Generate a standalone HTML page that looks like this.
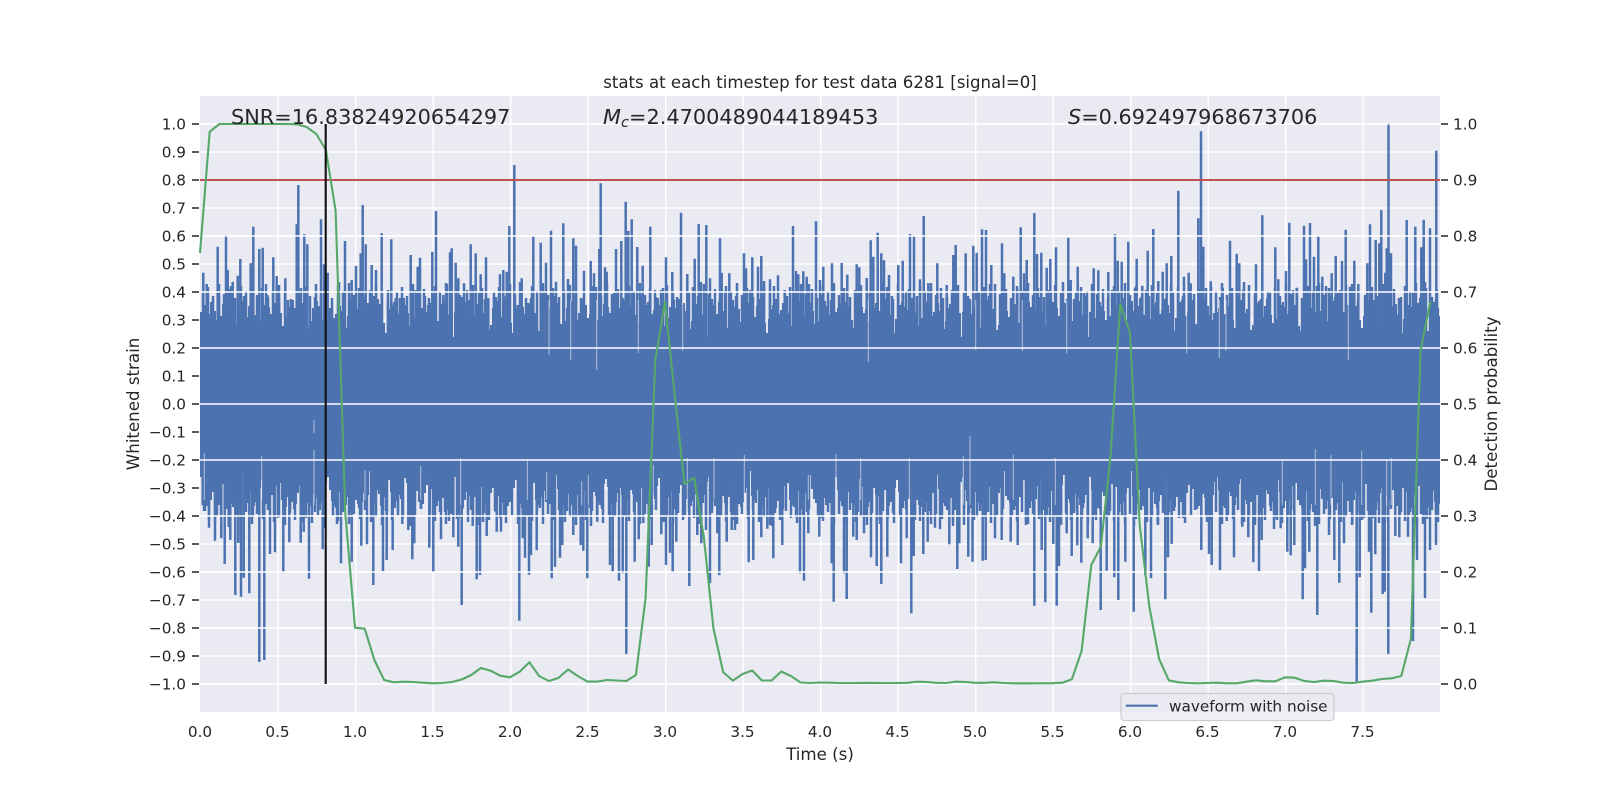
<!DOCTYPE html>
<html><head><meta charset="utf-8"><title>stats</title>
<style>html,body{margin:0;padding:0;background:#fff}svg{display:block}text{font-family:"DejaVu Sans",sans-serif;fill:#262626}</style></head>
<body>
<svg width="1600" height="800" viewBox="0 0 1600 800" xmlns="http://www.w3.org/2000/svg">
<defs>
<path id="ta" d="M1 34V60M3 30V60M5 27V60M7 40V60M9 36V60M11 24V60M13 28V60M15 33V60M17 42V60M19 50V60M21 38V60M23 26V60M25 22V60M27 29V60M29 35V60M31 31V60M33 44V60M35 52V60M37 47V60M39 30V60M41 25V60M43 23V60M45 33V60M47 39V60M49 28V60M51 21V60M53 26V60M55 37V60M57 45V60M59 55V60M61 41V60M63 31V60M65 27V60M67 24V60M69 29V60M71 36V60M73 32V60M75 25V60M77 20V60M79 27V60M81 35V60M83 48V60M85 53V60M87 40V60M89 29V60M91 24V60M93 22V60M95 30V60M97 38V60M99 34V60M101 27V60M103 25V60M105 33V60M107 46V60M109 51V60M111 43V60M113 30V60M115 26V60M117 23V60M119 28V60M121 37V60M123 42V60M125 35V60" stroke="#4C72B0" stroke-width="2.1" fill="none"/>
<path id="tb" d="M7 12V60M19 20V60M31 8V60M44 18V60M52 15V60M66 6V60M79 17V60M88 22V60M101 10V60M115 19V60M127 14V60M139 4V60M150 21V60M163 13V60M174 18V60" stroke="#4C72B0" stroke-width="2.5" fill="none"/>
<path id="tc" d="M3 14V60M8 9V60M13 18V60M19 6V60M24 16V60M30 11V60M35 20V60M41 8V60M46 13V60M52 5V60M57 17V60M62 10V60M68 19V60M73 12V60M79 7V60M85 15V60M91 21V60" stroke="#4C72B0" stroke-width="2.5" fill="none"/>
<pattern id="p1" width="127" height="60" patternUnits="userSpaceOnUse" patternTransform="translate(200,278)"><use href="#ta"/></pattern>
<pattern id="p2" width="181" height="60" patternUnits="userSpaceOnUse" patternTransform="translate(200,278)"><use href="#tb"/></pattern>
<pattern id="p5" width="97" height="60" patternUnits="userSpaceOnUse" patternTransform="translate(200,278)"><use href="#tc"/></pattern>
<pattern id="p3" width="127" height="60" patternUnits="userSpaceOnUse" patternTransform="translate(243,530) scale(1,-1)"><use href="#ta"/></pattern>
<pattern id="p4" width="181" height="60" patternUnits="userSpaceOnUse" patternTransform="translate(271,530) scale(1,-1)"><use href="#tb"/></pattern>
<pattern id="p6" width="97" height="60" patternUnits="userSpaceOnUse" patternTransform="translate(233,530) scale(1,-1)"><use href="#tc"/></pattern>
</defs>
<rect width="1600" height="800" fill="#fff"/>
<rect x="200" y="96" width="1240" height="616" fill="#EAEAF2"/>
<!-- left axes grid -->
<path d="M200 124H1440M200 152H1440M200 180H1440M200 208H1440M200 236H1440M200 264H1440M200 292H1440M200 320H1440M200 348H1440M200 376H1440M200 404H1440M200 432H1440M200 460H1440M200 488H1440M200 516H1440M200 544H1440M200 572H1440M200 600H1440M200 628H1440M200 656H1440M200 684H1440" stroke="#fff" stroke-width="1.4" fill="none"/>
<path d="M278.2 96V712M355.7 96V712M433.2 96V712M510.7 96V712M588.2 96V712M665.7 96V712M743.2 96V712M820.7 96V712M898.2 96V712M975.7 96V712M1053.2 96V712M1130.7 96V712M1208.2 96V712M1285.7 96V712M1363.2 96V712" stroke="#fff" stroke-width="1.4" fill="none"/>
<!-- waveform -->
<rect x="200" y="337" width="1240" height="134" fill="#4C72B0"/>
<rect x="200" y="278" width="1240" height="60" fill="url(#p1)"/>
<rect x="200" y="278" width="1240" height="60" fill="url(#p2)"/>
<rect x="200" y="278" width="1240" height="60" fill="url(#p5)"/>
<rect x="200" y="470" width="1240" height="60" fill="url(#p3)"/>
<rect x="200" y="470" width="1240" height="60" fill="url(#p4)"/>
<rect x="200" y="470" width="1240" height="60" fill="url(#p6)"/>
<path fill="none" stroke="#4C72B0" stroke-width="2.5" d="M203.3 272.7V345M206.7 284V345M217.7 246.7V345M226 235V345M227.7 270V345M232.7 281.7V345M237.7 275.7V345M240.3 259V345M250.7 263.3V345M253.3 226.7V345M259.3 249V345M262.7 247.7V345M267.3 295V345M273.3 257.3V345M276.7 276V345M285.3 278.3V345M296.7 224.3V345M298.3 185V345M304.3 234.3V345M307.3 244.3V345M321 219.3V345M324 264.3V345M327.7 272.7V345M345 241V345M351.7 280V345M356 266V345M360.7 253.3V345M362.7 205V345M365.7 244.3V345M371.7 265V345M376 270V345M381.7 233.3V345M391.3 239.3V345M395.7 298V345M410.7 255V345M415.7 290V345M417.7 266.7V345M420 257.7V345M432.3 251.7V345M436 211V345M443.3 295V345M450 252.3V345M451.7 248.3V345M455.7 262.7V345M458.3 278.3V345M464 283.3V345M470.7 244.3V345M475.7 253.3V345M480.7 274.3V345M486 257.3V345M488.3 298V345M494 296.7V345M500 274.3V345M503.3 270V345M506.7 271.7V345M509.3 226V345M514.3 165V345M517.7 305V345M521.7 278.3V345M528 303V345M533.3 236.7V345M540.7 242.7V345M546 262.7V345M551 230.7V345M556 281.7V345M563.3 223.3V345M568 279V345M573.3 238.3V345M576 245.7V345M584 270.7V345M590.7 261V345M594 273.3V345M600.7 183.3V345M599.3 249V345M605 267.3V345M606.7 271.7V345M616 249V345M621.3 241V345M625.7 201.7V345M628.3 231V345M631.7 219.3V345M637.3 247V345M642.7 265.7V345M650.3 226.7V345M655 290V345M666 257.3V345M672.3 272V345M681 212.7V345M687.3 274V345M694.7 258.7V345M698.7 224V345M706.3 225V345M710 278.3V345M720 238.3V345M721.7 272.7V345M729.3 273.3V345M736.7 297.7V345M744 253.3V345M746 268.3V345M752.3 257.3V345M758 266.7V345M761.3 256V345M764 281V345M770 279.3V345M778 275.3V345M784.7 290V345M793 226V345M796 271V345M798.3 274.3V345M803.3 271.3V345M806.7 276.7V345M816 221.3V345M820 280V345M823.3 266.7V345M832 263.3V345M841.7 263V345M847.3 274.7V345M856.7 264.3V345M859.3 267.3V345M866.7 278V345M870.7 240.3V345M873.3 256.7V345M877.7 232.7V345M881.3 253.3V345M884 260.3V345M889 275V345M898.3 265V345M902.7 260.7V345M910 234V345M914 235.7V345M920 279.3V345M923.7 216V345M928.3 283.3V345M937.3 263.3V345M946.7 285V345M953.3 255V345M955.7 245V345M965.7 253.3V345M973.3 245.7V345M976.7 252.7V345M982 229.3V345M986 230V345M991.3 265V345M1002 243.3V345M1004.3 273.3V345M1013.3 276.7V345M1017.3 289V345M1020.7 227.3V345M1024 273.3V345M1026.7 260V345M1034.3 213V345M1037 254V345M1041.3 252.7V345M1046.7 267.7V345M1050.3 259V345M1056 247.3V345M1068.3 237.7V345M1070.7 280V345M1077.7 266.7V345M1084 293V345M1093.7 268.3V345M1098.3 270.3V345M1108.3 272V345M1115 234.3V345M1117.7 260.7V345M1121.7 261.7V345M1128.3 241.7V345M1136.7 258.7V345M1142.3 285.7V345M1147.7 250.7V345M1153.3 229V345M1158.3 281V345M1162.7 271.7V345M1166.7 263.3V345M1171.3 256V345M1178.3 190.7V345M1184 276.7V345M1188.7 272.7V345M1190.7 283.3V345M1198.3 218.3V345M1201 131.3V345M1203.3 246.7V345M1210.7 281.3V345M1222.7 287.7V345M1230 240.7V345M1236.7 253.7V345M1239.3 263.3V345M1256 264.3V345M1262.3 215.3V345M1267.7 296.7V345M1275.3 247.3V345M1278.3 279.3V345M1286 271V345M1289.3 222.7V345M1296.7 287.7V345M1304 225.7V345M1306 259.3V345M1310 223V345M1314 256.7V345M1318.3 236V345M1322.3 276.7V345M1326 286V345M1331.7 273.3V345M1335.7 256V345M1342 261V345M1345.7 229.7V345M1350 286.7V345M1354.3 260.7V345M1358.3 284V345M1367.3 263.3V345M1370 224.3V345M1375.7 240V345M1379.3 243.3V345M1381.3 210V345M1385.3 272.7V345M1386.7 248.3V345M1388.5 123V345M1391 253.3V345M1406.7 220V345M1415.3 226.7V345M1421.3 247.3V345M1423.7 219.7V345M1430 228.3V345M1436.3 150.7V345"/>
<path fill="none" stroke="#4C72B0" stroke-width="2.5" d="M202.7 505V463M209 527.7V463M215 540.7V463M221.3 538.3V463M224.7 564V463M228.7 527V463M230.3 540V463M235.3 595V463M238.3 543V463M241 596.7V463M243.7 577.7V463M249.3 593.3V463M259.3 662V463M264.3 660V463M270 554V463M275 552.3V463M283.3 572.7V463M289.3 542.3V463M300.7 542.7V463M303.7 531.7V463M309 578.7V463M322.7 549.3V463M324.3 528V463M341 563.3V463M351.7 561.7V463M361.3 545.7V463M367 544.3V463M373.3 585V463M383 571V463M386.7 560V463M392.7 550V463M402.3 524V463M408.3 530V463M412.3 559.3V463M414.3 543.3V463M429.3 547.7V463M433.3 571.7V463M441 539.3V463M449 521V463M453.3 537.3V463M458.3 546.7V463M461.7 605V463M472.7 526V463M476.7 579.3V463M480 575V463M486.7 536V463M496.7 531.7V463M501 531.7V463M519.3 620.7V463M522.7 538.3V463M525 557.7V463M529 574.7V463M531 555V463M536.7 550.3V463M551.7 578.3V463M555 566.7V463M560 557.7V463M562.3 545V463M573.3 535V463M580.7 545V463M583.3 550.7V463M587.3 578.3V463M597.3 521.7V463M610 565V463M612.7 571.7V463M619 580.7V463M622.7 573.3V463M626.3 654V463M634.7 561.7V463M638.7 539.3V463M643.3 523V463M648.7 566.7V463M651.7 545V463M661.3 534.3V463M666 565V463M670 552.7V463M672.7 571.7V463M676.3 541.7V463M689.3 586V463M697.3 535V463M701.3 543.3V463M706 530V463M710 583.3V463M717.3 533.3V463M719.3 575.3V463M726.7 541.7V463M731.7 530V463M735 530V463M748.7 562.3V463M753.3 560V463M761.3 537.3V463M767.3 528.7V463M773.3 558.3V463M782.3 545V463M800 573.3V463M804 580.7V463M808.3 533.3V463M819.3 536.7V463M831.7 563.3V463M833.7 601.7V463M844 573.3V463M846.7 599V463M853.3 536.7V463M856.7 540V463M864 533.3V463M871 557.3V463M876.7 566V463M881.3 584V463M887.3 556.7V463M901 563.3V463M906.7 538.3V463M911.3 613.3V463M913.7 556V463M923.3 554V463M927.7 541.7V463M935 527.7V463M940 529.3V463M949.3 544.3V463M957.3 569V463M959.3 543.3V463M968.3 556.7V463M972.5 561.7V463M982.7 560.7V463M985.7 560V463M995 538.3V463M1001.7 540V463M1010.7 541.7V463M1017.7 545V463M1026 525V463M1034.3 605.7V463M1041.7 550V463M1045.3 602.3V463M1053.3 544V463M1056.7 605.7V463M1059 566V463M1066.7 533.3V463M1071.7 556V463M1077.3 545.3V463M1081.3 562.7V463M1087.7 538.3V463M1092.7 543.3V463M1100.7 610V463M1106.7 570.7V463M1114.3 577.3V463M1118.3 600V463M1125.3 561.7V463M1133.7 611.7V463M1145.3 575V463M1151 578.3V463M1157.7 523.3V463M1165.3 599.3V463M1168 557.3V463M1171.7 544V463M1201.3 550V463M1209 554V463M1211.7 565V463M1220 570V463M1226.7 521V463M1234 557.3V463M1242.3 526.7V463M1248.3 537.3V463M1253.3 562.3V463M1259 571V463M1261.7 540V463M1274 529V463M1280.7 528.3V463M1287.3 551.7V463M1290.7 555.3V463M1294.3 545V463M1302.7 599.3V463M1305 568.3V463M1309.3 551.7V463M1317.3 615V463M1329 535V463M1334.3 560V463M1339.3 582.7V463M1344 543.3V463M1352.3 523.3V463M1356.7 683V463M1359.7 577.3V463M1369 551.7V463M1371.3 612.7V463M1375.3 554.3V463M1382.7 594V463M1384.7 591.7V463M1388.3 654V463M1395.3 536V463M1399.3 537.3V463M1408 536.7V463M1413 641V463M1417 560V463M1425 598V463M1430 550V463M1436 545V463"/>
<!-- thin gaps in the waveform -->
<path fill="none" stroke="#EAEAF2" stroke-width="1" stroke-opacity="0.65" d="M549 300V355M570.7 300V360M596.7 300V370M638.3 300V353M682.7 300V351M868.3 300V362M975.7 300V350M1022.3 300V351M1066.7 300V353M1186.7 300V353M1219.3 300V358M1226 300V351M1348.3 300V360M314 420V433M546.7 472V500M581.7 481V505M588.3 475V505M653.3 465V505M687.3 458V500M714 458V500M744.3 455V500M808.3 475V500M836 454V505M860.7 458V500M909.3 458V505M963.3 456V505M970 436V505M204.3 453V500M261.7 456V500M314 450V505M365 470V500M420.7 466V500M460.7 458V505M527.3 460V500M1013.3 455V500M1055.3 458V505M1282.3 460V505M1315.3 449V505M1331 455V505M1361.7 451V505M1386.7 460V505M1391.3 458V505"/>
<!-- twin axes grid -->
<path d="M200 124H1440M200 180H1440M200 236H1440M200 292H1440M200 348H1440M200 404H1440M200 460H1440M200 516H1440M200 572H1440M200 628H1440M200 684H1440" stroke="#fff" stroke-width="1.6" fill="none"/>
<path d="M200 180H1440" stroke="#C44E52" stroke-width="2.1" fill="none"/>
<polyline fill="none" stroke="#55A868" stroke-width="2.1" stroke-linejoin="round" points="200,253 209.7,131.7 219.4,124 229.1,124 238.8,124 248.4,124 258.1,124 267.8,124 277.5,124 287.2,124 296.9,124.3 306.6,127 316.3,134 325.9,150 335.6,210.7 345.3,513 355,627.7 364.7,628.7 374.4,660 384.1,680 393.8,682.3 403.4,681.7 413.1,682 422.8,682.7 432.5,683.3 442.2,683 451.9,682 461.6,679.5 471.3,675 480.9,668 490.6,670.7 500.3,675.7 510,677.3 519.7,671.7 529.4,662.3 539.1,676 548.8,681 558.4,678 568.1,669.5 577.8,676 587.5,681.6 597.2,681.6 606.9,680 616.6,680.5 626.3,681 635.9,675 645.6,598 655.3,360 665,302 674.7,395 684.4,484 694.1,477.7 703.8,537 713.4,628 723.1,672 732.8,680.6 742.5,674 752.2,670.5 761.9,680.5 771.6,680.5 781.3,671.5 790.9,676 800.6,682.5 810.3,683 820,682.5 829.7,682.7 839.4,683 849.1,683 858.8,683 868.4,682.8 878.1,683 887.8,683 897.5,683 907.2,682.8 916.9,681.7 926.6,682 936.3,682.8 945.9,683 955.6,681.7 965.3,681.9 975,682.8 984.7,682.8 994.4,682.3 1004.1,683 1013.8,683.3 1023.4,683.4 1033.1,683.3 1042.8,683.3 1052.5,683.2 1062.2,682.7 1071.9,679.3 1081.6,651 1091.3,565 1100.9,546.5 1110.6,455 1120.3,304 1130,333 1139.7,525 1149.4,607 1159.1,659 1168.8,680.3 1178.4,682.3 1188.1,683 1197.8,683.3 1207.5,683 1217.2,682.7 1226.9,683.3 1236.6,683.3 1246.3,681.7 1255.9,680.3 1265.6,681.3 1275.3,681.3 1285,677.3 1294.7,677.7 1304.4,681 1314.1,682 1323.8,680.7 1333.4,681 1343.1,682.7 1352.8,683 1362.5,681.7 1372.2,680.7 1381.9,679 1391.6,678.3 1401.3,676 1410.9,639 1420.6,350 1430.3,302"/>
<path d="M325.7 124V684" stroke="#111" stroke-width="2.1" fill="none"/>
<!-- tick marks -->
<path d="M192 124H199M192 152H199M192 180H199M192 208H199M192 236H199M192 264H199M192 292H199M192 320H199M192 348H199M192 376H199M192 404H199M192 432H199M192 460H199M192 488H199M192 516H199M192 544H199M192 572H199M192 600H199M192 628H199M192 656H199M192 684H199" stroke="#444" stroke-width="1.7" fill="none"/>
<path d="M1441 124H1448M1441 180H1448M1441 236H1448M1441 292H1448M1441 348H1448M1441 404H1448M1441 460H1448M1441 516H1448M1441 572H1448M1441 628H1448M1441 684H1448" stroke="#444" stroke-width="1.7" fill="none"/>
<!-- left tick labels -->
<g font-size="15.28" text-anchor="end">
<text x="186" y="129.5">1.0</text><text x="186" y="157.5">0.9</text><text x="186" y="185.5">0.8</text><text x="186" y="213.5">0.7</text><text x="186" y="241.5">0.6</text><text x="186" y="269.5">0.5</text><text x="186" y="297.5">0.4</text><text x="186" y="325.5">0.3</text><text x="186" y="353.5">0.2</text><text x="186" y="381.5">0.1</text><text x="186" y="409.5">0.0</text><text x="186" y="437.5">−0.1</text><text x="186" y="465.5">−0.2</text><text x="186" y="493.5">−0.3</text><text x="186" y="521.5">−0.4</text><text x="186" y="549.5">−0.5</text><text x="186" y="577.5">−0.6</text><text x="186" y="605.5">−0.7</text><text x="186" y="633.5">−0.8</text><text x="186" y="661.5">−0.9</text><text x="186" y="689.5">−1.0</text>
</g>
<!-- right tick labels -->
<g font-size="15.28">
<text x="1453" y="129.5">1.0</text><text x="1453" y="185.5">0.9</text><text x="1453" y="241.5">0.8</text><text x="1453" y="297.5">0.7</text><text x="1453" y="353.5">0.6</text><text x="1453" y="409.5">0.5</text><text x="1453" y="465.5">0.4</text><text x="1453" y="521.5">0.3</text><text x="1453" y="577.5">0.2</text><text x="1453" y="633.5">0.1</text><text x="1453" y="689.5">0.0</text>
</g>
<!-- x tick labels -->
<g font-size="15.28" text-anchor="middle">
<text x="200" y="737">0.0</text><text x="277.5" y="737">0.5</text><text x="355" y="737">1.0</text><text x="432.5" y="737">1.5</text><text x="510" y="737">2.0</text><text x="587.5" y="737">2.5</text><text x="665" y="737">3.0</text><text x="742.5" y="737">3.5</text><text x="820" y="737">4.0</text><text x="897.5" y="737">4.5</text><text x="975" y="737">5.0</text><text x="1052.5" y="737">5.5</text><text x="1130" y="737">6.0</text><text x="1207.5" y="737">6.5</text><text x="1285" y="737">7.0</text><text x="1362.5" y="737">7.5</text>
</g>
<text x="820" y="88" font-size="16.6" text-anchor="middle">stats at each timestep for test data 6281 [signal=0]</text>
<text x="820" y="760" font-size="16.67" text-anchor="middle">Time (s)</text>
<text transform="translate(139,404) rotate(-90)" font-size="16.67" text-anchor="middle">Whitened strain</text>
<text transform="translate(1497,404) rotate(-90)" font-size="16.67" text-anchor="middle">Detection probability</text>
<!-- annotations -->
<text x="231" y="124" font-size="20.83">SNR=16.83824920654297</text>
<text x="603" y="124" font-size="20.83"><tspan font-style="italic">M</tspan><tspan font-style="italic" font-size="14.6" dy="3">c</tspan><tspan dy="-3">=2.4700489044189453</tspan></text>
<text x="1068" y="124" font-size="20.83"><tspan font-style="italic">S</tspan>=0.692497968673706</text>
<!-- legend -->
<rect x="1121" y="693.5" width="213" height="27" rx="3" ry="3" fill="#EAEAF2" fill-opacity="0.8" stroke="#CCCCCC" stroke-width="1.2"/>
<path d="M1125.7 705.7H1157.7" stroke="#4C72B0" stroke-width="2.1" fill="none"/>
<text x="1169" y="711.7" font-size="15.28">waveform with noise</text>
</svg>
</body></html>
